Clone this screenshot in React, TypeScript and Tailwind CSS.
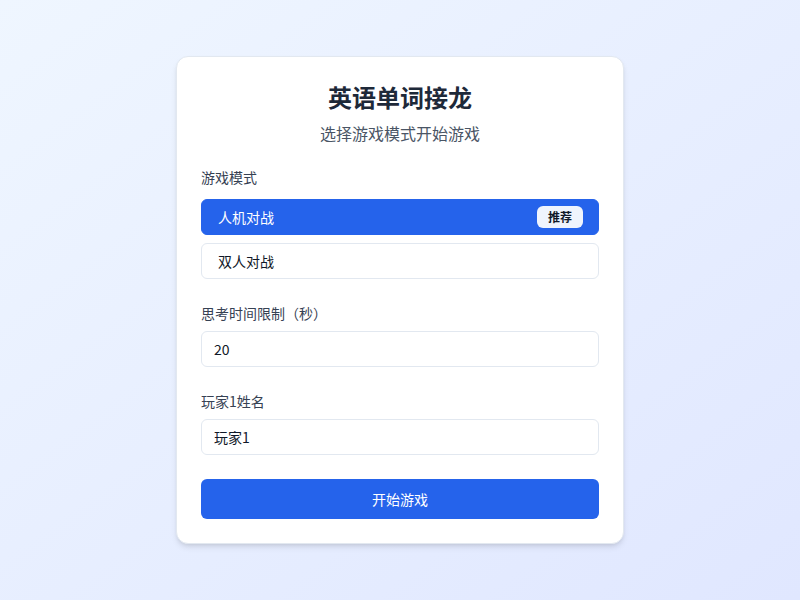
import { useState } from "react";

const FONT = { fontFamily: '"Noto Sans CJK SC", "Noto Sans", sans-serif' };

type Mode = "ai" | "pvp";

export default function App() {
  const [mode, setMode] = useState<Mode>("ai");
  const [seconds, setSeconds] = useState("20");
  const [name, setName] = useState("玩家1");

  const modeBtn = (active: boolean) =>
    active
      ? "flex items-center justify-between w-full h-9 pl-4 pr-4 rounded-md bg-[#2563eb] text-white text-sm border border-[#2563eb]"
      : "flex items-center justify-between w-full h-9 pl-4 pr-4 rounded-md bg-white text-gray-900 text-sm border border-slate-200";

  return (
    <div
      className="min-h-screen flex items-center justify-center bg-gradient-to-br from-[#eff6ff] to-[#e0e7ff]"
      style={FONT}
    >
      <div className="w-[448px] bg-white rounded-xl border border-slate-200 shadow-md p-6">
        <h1 className="text-2xl font-bold text-gray-800 text-center">英语单词接龙</h1>
        <p className="mt-2 text-base text-gray-600 text-center">选择游戏模式开始游戏</p>

        <div className="mt-[22px]">
          <div className="text-sm text-gray-700 mb-3">游戏模式</div>
          <div className="flex flex-col gap-2">
            <button type="button" className={modeBtn(mode === "ai")} onClick={() => setMode("ai")}>
              <span>人机对战</span>
              <span className="h-[22px] px-[11px] -mr-px flex items-center rounded-md bg-[#eff4fd] text-gray-900 text-xs font-bold">
                推荐
              </span>
            </button>
            <button type="button" className={modeBtn(mode === "pvp")} onClick={() => setMode("pvp")}>
              <span>双人对战</span>
            </button>
          </div>
        </div>

        <div className="mt-6">
          <label className="block text-sm text-gray-700 mb-2">思考时间限制（秒）</label>
          <input
            className="w-full h-9 px-3 rounded-md border border-slate-200 text-sm text-gray-900 outline-none"
            value={seconds}
            onChange={(e) => setSeconds(e.target.value)}
          />
        </div>

        <div className="mt-6">
          <label className="block text-sm text-gray-700 mb-2">玩家1姓名</label>
          <input
            className="w-full h-9 px-3 rounded-md border border-slate-200 text-sm text-gray-900 outline-none"
            value={name}
            onChange={(e) => setName(e.target.value)}
          />
        </div>

        <button
          type="button"
          className="mt-6 w-full h-10 rounded-md bg-[#2563eb] text-white text-sm"
        >
          开始游戏
        </button>
      </div>
    </div>
  );
}
